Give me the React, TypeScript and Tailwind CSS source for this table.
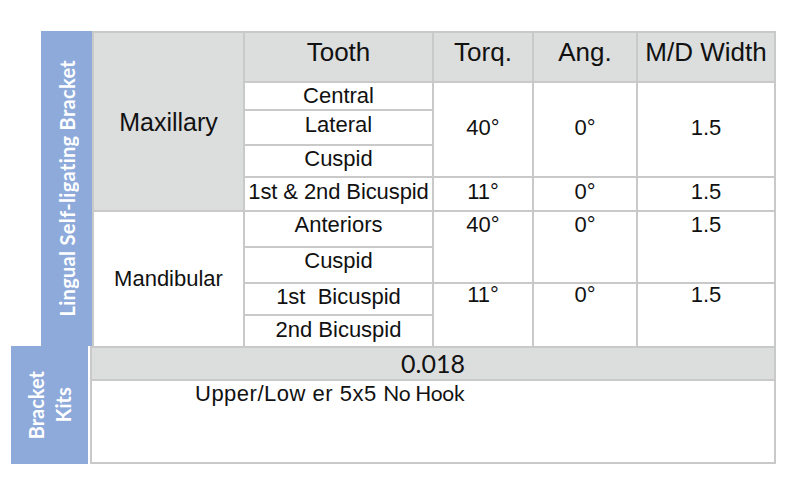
import React from 'react';

const head = 'bg-[#dcdddd] flex items-start justify-center pt-[6px] text-[26px] leading-none';
const cell = 'bg-white flex items-center justify-center text-[22px] leading-none';
const top = 'bg-white flex items-start justify-center text-[22px] leading-none';

export default function App() {
  return (
    <div className="min-h-[482px] w-[800px] bg-white pt-[31px] font-['Liberation_Sans',Arial,sans-serif] text-[#111]">
      {/* bracket table */}
      <div className="ml-[41px] flex">
        <div className="flex h-[315px] w-[51px] items-center justify-center bg-[#8eaadb]">
          <span className="rotate-180 font-['Lato',sans-serif] text-[20px] font-bold leading-none tracking-[0.3px] whitespace-nowrap text-white [writing-mode:vertical-rl]">
            Lingual Self-ligating Bracket
          </span>
        </div>
        <div className="grid grid-cols-[149px_187px_98px_102px_136px] grid-rows-[48px_26px_33px_30px_32px_34px_34px_30px_30px] gap-[2px] bg-[#c9c9c9] p-[2px] pb-0">
          <div className="row-span-5 flex items-center justify-center bg-[#dcdddd] pt-[3px] text-[25px]">Maxillary</div>
          <div className={head}>Tooth</div>
          <div className={head}>Torq.</div>
          <div className={head}>Ang.</div>
          <div className={head}>M/D Width</div>

          <div className={cell}>Central</div>
          <div className={`${cell} row-span-3 pb-[4px]`}>40°</div>
          <div className={`${cell} row-span-3 pb-[4px]`}>0°</div>
          <div className={`${cell} row-span-3 pb-[4px]`}>1.5</div>
          <div className={`${cell} pb-[5px]`}>Lateral</div>
          <div className={`${cell} pb-[4px]`}>Cuspid</div>
          <div className={`${cell} pb-[5px] whitespace-nowrap tracking-[-0.1px]`}>1st &amp; 2nd Bicuspid</div>
          <div className={`${cell} pb-[5px]`}>11°</div>
          <div className={`${cell} pb-[5px]`}>0°</div>
          <div className={`${cell} pb-[5px]`}>1.5</div>

          <div className={`${cell} row-span-4`}>Mandibular</div>
          <div className={`${cell} pb-[8px]`}>Anteriors</div>
          <div className={`${top} row-span-2 pt-[2px]`}>40°</div>
          <div className={`${top} row-span-2 pt-[2px]`}>0°</div>
          <div className={`${top} row-span-2 pt-[2px]`}>1.5</div>
          <div className={`${cell} pb-[9px]`}>Cuspid</div>
          <div className={`${cell} pb-[4px] whitespace-pre`}>1st  Bicuspid</div>
          <div className={`${top} row-span-2`}>11°</div>
          <div className={`${top} row-span-2`}>0°</div>
          <div className={`${top} row-span-2`}>1.5</div>
          <div className={`${cell} pb-[3px]`}>2nd Bicuspid</div>
        </div>
      </div>

      {/* kits */}
      <div className="ml-[11px] flex gap-[2px]">
        <div className="flex h-[118px] w-[77px] items-center justify-center bg-[#8eaadb]">
          <span className="rotate-180 text-center font-['Lato',sans-serif] text-[20px] font-bold leading-[27px] text-white [writing-mode:vertical-rl]">
            Bracket
            <br />
            Kits
          </span>
        </div>
        <div className="flex h-[118px] w-[686px] flex-col border-2 border-[#c9c9c9]">
          <div className="flex h-[33px] items-center justify-center border-b-2 border-[#c9c9c9] bg-[#dcdddd] font-['Lato',sans-serif] text-[25px]">
            0.018
          </div>
          <div className="flex-1 pl-[103px] pt-[1px] leading-none">
            <span className="text-[22px] tracking-[0.5px]">Upper/Low er 5x5 </span>
            <span className="font-['Lato',sans-serif] text-[21px] tracking-[-0.3px]">No Hook</span>
          </div>
        </div>
      </div>
    </div>
  );
}
